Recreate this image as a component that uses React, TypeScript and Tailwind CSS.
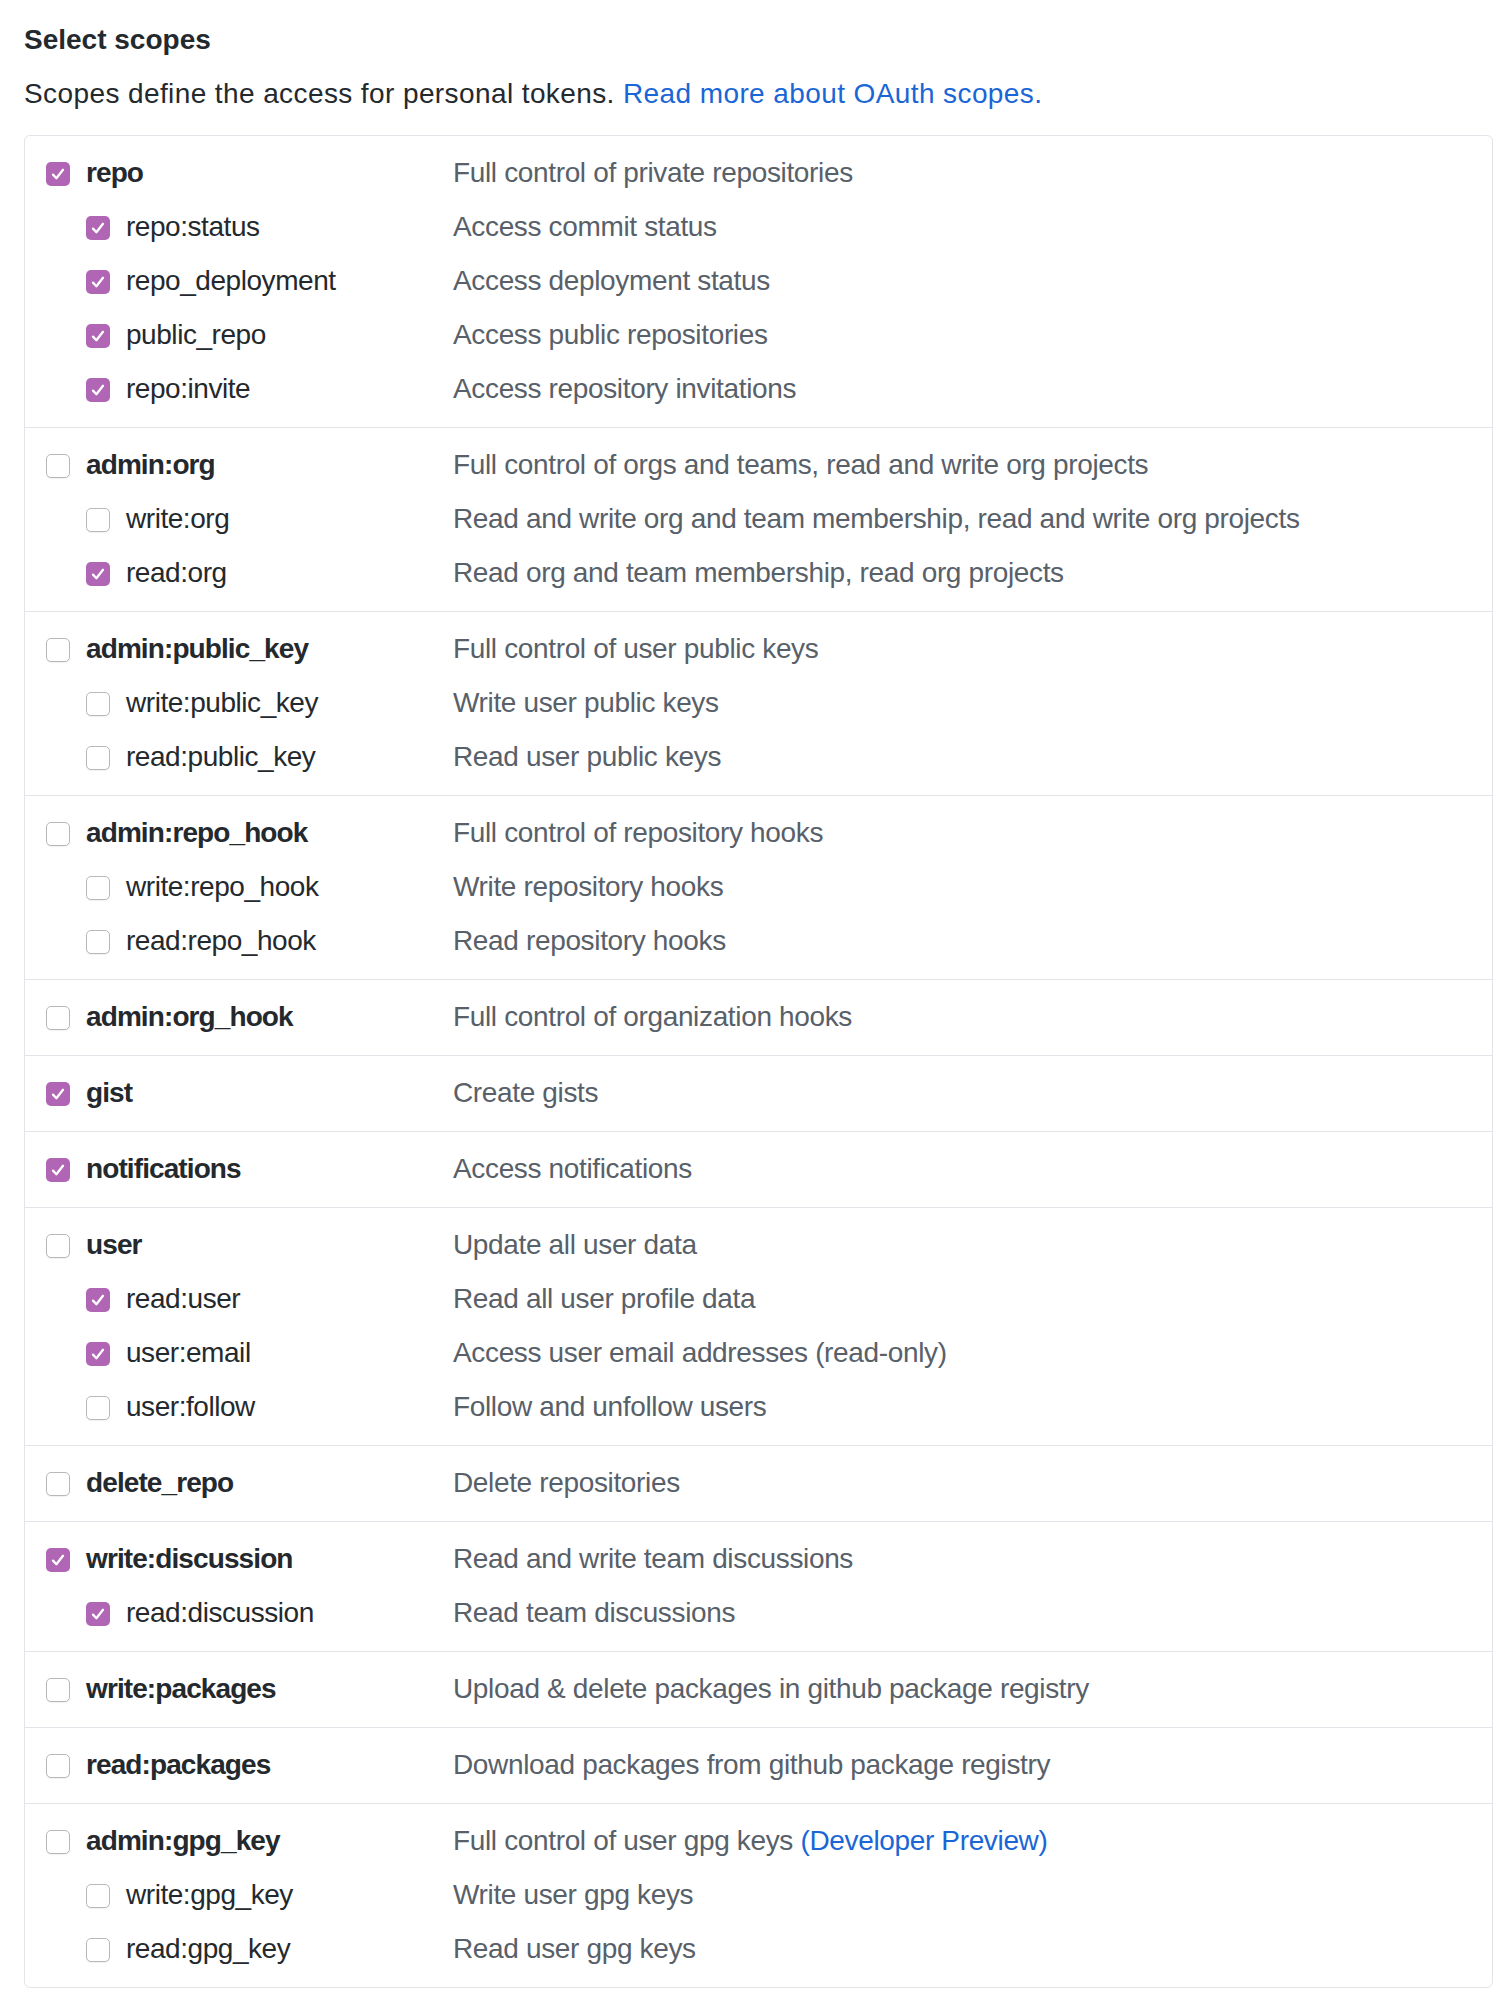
import React from "react";

type Child = { name: string; desc: string; checked: boolean };
type Group = { name: string; desc: string; checked: boolean; link?: string; children?: Child[] };

const groups: Group[] = [
  {
    name: "repo",
    desc: "Full control of private repositories",
    checked: true,
    children: [
      { name: "repo:status", desc: "Access commit status", checked: true },
      { name: "repo_deployment", desc: "Access deployment status", checked: true },
      { name: "public_repo", desc: "Access public repositories", checked: true },
      { name: "repo:invite", desc: "Access repository invitations", checked: true },
    ],
  },
  {
    name: "admin:org",
    desc: "Full control of orgs and teams, read and write org projects",
    checked: false,
    children: [
      { name: "write:org", desc: "Read and write org and team membership, read and write org projects", checked: false },
      { name: "read:org", desc: "Read org and team membership, read org projects", checked: true },
    ],
  },
  {
    name: "admin:public_key",
    desc: "Full control of user public keys",
    checked: false,
    children: [
      { name: "write:public_key", desc: "Write user public keys", checked: false },
      { name: "read:public_key", desc: "Read user public keys", checked: false },
    ],
  },
  {
    name: "admin:repo_hook",
    desc: "Full control of repository hooks",
    checked: false,
    children: [
      { name: "write:repo_hook", desc: "Write repository hooks", checked: false },
      { name: "read:repo_hook", desc: "Read repository hooks", checked: false },
    ],
  },
  { name: "admin:org_hook", desc: "Full control of organization hooks", checked: false },
  { name: "gist", desc: "Create gists", checked: true },
  { name: "notifications", desc: "Access notifications", checked: true },
  {
    name: "user",
    desc: "Update all user data",
    checked: false,
    children: [
      { name: "read:user", desc: "Read all user profile data", checked: true },
      { name: "user:email", desc: "Access user email addresses (read-only)", checked: true },
      { name: "user:follow", desc: "Follow and unfollow users", checked: false },
    ],
  },
  { name: "delete_repo", desc: "Delete repositories", checked: false },
  {
    name: "write:discussion",
    desc: "Read and write team discussions",
    checked: true,
    children: [{ name: "read:discussion", desc: "Read team discussions", checked: true }],
  },
  { name: "write:packages", desc: "Upload & delete packages in github package registry", checked: false },
  { name: "read:packages", desc: "Download packages from github package registry", checked: false },
  {
    name: "admin:gpg_key",
    desc: "Full control of user gpg keys",
    checked: false,
    link: "(Developer Preview)",
    children: [
      { name: "write:gpg_key", desc: "Write user gpg keys", checked: false },
      { name: "read:gpg_key", desc: "Read user gpg keys", checked: false },
    ],
  },
];

function Box({ checked }: { checked: boolean }) {
  if (checked) {
    return (
      <span className="mt-[2px] flex h-[24px] w-[24px] shrink-0 items-center justify-center rounded-[5px] bg-[#b066b4]">
        <svg width="24" height="24" viewBox="0 0 24 24" fill="none">
          <path
            d="M7 12.6 L10.4 16.2 L17 7.8"
            stroke="#ffffff"
            strokeWidth="2.3"
            strokeLinecap="round"
            strokeLinejoin="round"
          />
        </svg>
      </span>
    );
  }
  return (
    <span className="mt-[2px] block h-[24px] w-[24px] shrink-0 rounded-[5px] border border-[#b8b8b8] bg-white shadow-[0_1px_1px_rgba(0,0,0,0.06)]" />
  );
}

function Row({
  name,
  desc,
  checked,
  bold,
  link,
}: {
  name: string;
  desc: string;
  checked: boolean;
  bold?: boolean;
  link?: string;
}) {
  return (
    <div className="grid h-[54px] grid-cols-[407px_1fr] items-center leading-[54px]">
      <div className={bold ? "flex items-center gap-[16px]" : "flex items-center gap-[16px] pl-[40px]"}>
        <Box checked={checked} />
        <span
          className={
            bold
              ? "font-bold tracking-[-0.9px] text-[#24292e]"
              : "tracking-[-0.45px] text-[#24292e]"
          }
        >
          {name}
        </span>
      </div>
      <div className="whitespace-nowrap tracking-[-0.35px] text-[#586069]">
        {desc}
        {link ? (
          <>
            {" "}
            <span className="text-[#1a66d6]">{link}</span>
          </>
        ) : null}
      </div>
    </div>
  );
}

export default function App() {
  return (
    <div
      className="min-h-[1998px] bg-white pl-[24px] pr-[11px] pt-[19px] text-[28px]"
      style={{ fontFamily: '"Liberation Sans", Arial, sans-serif' }}
    >
      <div className="font-bold leading-[42px] text-[#24292e]">Select scopes</div>
      <div className="mt-[12px] leading-[42px] tracking-[0.4px] text-[#24292e]">
        Scopes define the access for personal tokens.{" "}
        <span className="text-[#1a66d6]">Read more about OAuth scopes.</span>
      </div>
      <div className="mt-[20px] rounded-[6px] border border-[#e1e4e8]">
        {groups.map((g, i) => (
          <div
            key={g.name}
            className={
              i === 0
                ? "pb-[11px] pl-[21px] pt-[10px]"
                : "border-t border-[#e1e4e8] pb-[11px] pl-[21px] pt-[10px]"
            }
          >
            <Row name={g.name} desc={g.desc} checked={g.checked} bold link={g.link} />
            {g.children?.map((c) => (
              <Row key={c.name} name={c.name} desc={c.desc} checked={c.checked} />
            ))}
          </div>
        ))}
      </div>
    </div>
  );
}
